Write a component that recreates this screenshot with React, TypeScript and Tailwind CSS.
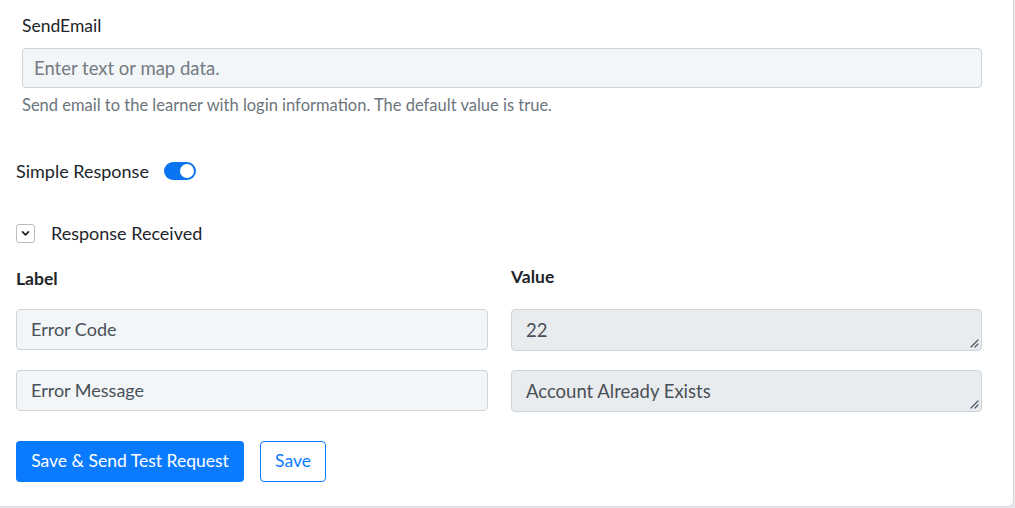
import React from 'react';

// Small diagonal grip drawn in the corner of a resizable textarea
function ResizeGrip() {
  return (
    <svg className="absolute right-[2px] bottom-[2px]" width="10" height="10" viewBox="0 0 10 10">
      <path d="M9 2 L2 9 M9 6 L6 9" stroke="#4b5563" strokeWidth="1.2" strokeLinecap="round" />
    </svg>
  );
}

export default function App() {
  const rows = [
    { label: 'Error Code', value: '22' },
    { label: 'Error Message', value: 'Account Already Exists' },
  ];

  return (
    <div className="w-[1015px] h-[508px] bg-[#e9e9ee] font-['Lato',sans-serif] text-[#212529]">
      <div className="w-[1014px] h-[507px] bg-white border-r border-b border-[#dadade] rounded-br-[6px] flex flex-col">
        {/* SendEmail field */}
        <div className="px-[22px] pt-[15px] w-[982px]">
          <div className="text-[17.5px] leading-[22px]">SendEmail</div>
          <input
            className="mt-[11px] w-[960px] h-[40px] px-[11px] bg-[#f3f6f9] border border-[#ced4da] rounded-[4px] text-[18.5px] placeholder:text-[#747b82] outline-none"
            placeholder="Enter text or map data."
          />
          <div className="mt-[6px] text-[16.5px] leading-[22px] text-[#6c757d]">
            Send email to the learner with login information. The default value is true.
          </div>
        </div>

        {/* Simple response toggle */}
        <div className="ml-[16px] mt-[42px] flex items-center h-[26px]">
          <span className="text-[18px] leading-[26px]">Simple Response</span>
          <div className="ml-[15px] w-[32px] h-[18px] rounded-full bg-[#0b74f1] flex items-center justify-end px-[2px]">
            <div className="w-[14px] h-[14px] rounded-full bg-white" />
          </div>
        </div>

        {/* Collapsible response section */}
        <div className="ml-[16px] mt-[36px] flex items-center h-[26px]">
          <div className="w-[19px] h-[19px] border border-[#b9bec4] rounded-[3px] flex items-center justify-center">
            <svg width="11" height="11" viewBox="0 0 10 10">
              <path d="M2.3 3.6 L5 6.3 L7.7 3.6" fill="none" stroke="#212529" strokeWidth="1.6" strokeLinecap="round" strokeLinejoin="round" />
            </svg>
          </div>
          <span className="ml-[16px] text-[18px] leading-[26px]">Response Received</span>
        </div>

        <div className="ml-[16px] mt-[20px] w-[966px] grid grid-cols-[472px_471px] gap-x-[23px]">
          <div className="text-[17.5px] font-bold leading-[22px] mt-[2px]">Label</div>
          <div className="text-[17.5px] font-bold leading-[22px]">Value</div>

          {rows.map((row, i) => (
            <React.Fragment key={row.label}>
              <div className={`${i === 0 ? 'mt-[19px]' : 'mt-[19px]'} h-[41px] px-[14px] flex items-center bg-[#f3f6f9] border border-[#ced4da] rounded-[4px] text-[18px] text-[#495057]`}>
                {row.label}
              </div>
              <div className={`${i === 0 ? 'mt-[19px]' : 'mt-[19px]'} relative h-[42px] px-[14px] pt-[7px] bg-[#e9ecef] border border-[#ced4da] rounded-[4px] text-[18.5px] leading-[26px] text-[#495057]`}>
                {row.value}
                <ResizeGrip />
              </div>
            </React.Fragment>
          ))}
        </div>

        {/* Actions */}
        <div className="ml-[16px] mt-[29px] flex gap-[16px]">
          <button className="h-[41px] w-[228px] bg-[#0a7bff] text-white text-[17.5px] rounded-[4px]">
            Save &amp; Send Test Request
          </button>
          <button className="h-[41px] w-[66px] bg-white border border-[#0a7bff] text-[#0a7bff] text-[17.5px] rounded-[4px]">
            Save
          </button>
        </div>
      </div>
    </div>
  );
}
